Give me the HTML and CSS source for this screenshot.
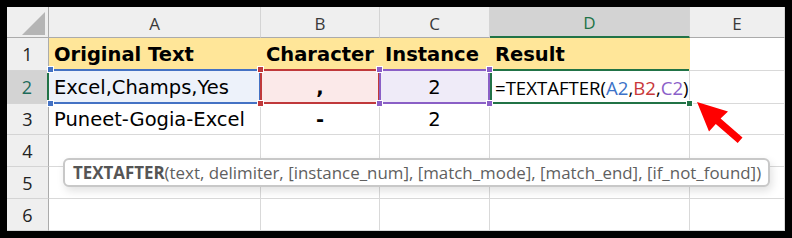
FILE: index.html
```html
<!DOCTYPE html>
<html>
  <head>
    <title>TEXTAFTER</title>
    <link rel="stylesheet" href="styles.css">
  </head>
  <body>
    <div class="sheet">
      <div class="grid">
        <div class="hd corner">
          <svg width="42" height="31"><polygon points="38,5 38,28 15,28" fill="#b5b5b5" /></svg>
        </div>
        <div class="hd">A</div>
        <div class="hd">B</div>
        <div class="hd">C</div>
        <div class="hd sel">D</div>
        <div class="hd">E</div>

        <div class="rh">1</div>
        <div class="c head">Original Text</div>
        <div class="c head">Character</div>
        <div class="c head">Instance</div>
        <div class="c head">Result</div>
        <div class="c"></div>

        <div class="rh sel">2</div>
        <div class="c rng blue">
          Excel,Champs,Yes
          <span class="hdl tl"></span><span class="hdl bl"></span>
        </div>
        <div class="c rng red mid bold">
          ,
          <span class="hdl tl"></span><span class="hdl bl"></span>
        </div>
        <div class="c rng purple mid">
          2
          <span class="hdl tl"></span><span class="hdl bl"></span>
          <span class="hdl tr"></span><span class="hdl br"></span>
        </div>
        <div class="c active">
          <span class="formula">=TEXTAFTER(<span class="f-blue">A2</span>,<span class="f-red">B2</span>,<span class="f-purple">C2</span>)</span>
          <span class="fill"></span>
        </div>
        <div class="c"></div>

        <div class="rh">3</div>
        <div class="c">Puneet-Gogia-Excel</div>
        <div class="c mid bold">-</div>
        <div class="c mid">2</div>
        <div class="c"></div>
        <div class="c"></div>

        <div class="rh">4</div>
        <div class="c"></div><div class="c"></div><div class="c"></div><div class="c"></div><div class="c"></div>
        <div class="rh">5</div>
        <div class="c"></div><div class="c"></div><div class="c"></div><div class="c"></div><div class="c"></div>
        <div class="rh">6</div>
        <div class="c"></div><div class="c"></div><div class="c"></div><div class="c"></div><div class="c"></div>
      </div>

      <div class="tooltip"><b>TEXTAFTER</b>(text, delimiter, [instance_num], [match_mode], [match_end], [if_not_found])</div>

      <svg class="arrow" width="778" height="224">
        <polygon points="690,95 721,104.5 713.6,111.6 735.5,130.6 730.7,135.9 708.8,116.9 702,124.5" fill="#ff0000" />
      </svg>
    </div>
  </body>
</html>
```

FILE: styles.css
```css
body {
  margin: 0;
  padding: 7px;
  background-color: #000;
}

.sheet {
  position: relative;
  width: 778px;
  height: 224px;
  overflow: hidden;
  background-color: #fff;
}

.grid {
  display: grid;
  grid-template-columns: 42px 212px 119px 110px 200px 95px;
  grid-template-rows: 31px 33px 33px 31px 32px 32px 32px;
}

.hd {
  display: flex;
  align-items: center;
  justify-content: center;
  padding-top: 2px;
  box-sizing: border-box;
  border-right: 1px solid #d4d4d4;
  border-bottom: 1px solid #ababab;
  background-color: #efefef;
  font-family: "Open Sans", sans-serif;
  font-size: 17px;
  color: #3a3a3a;
}

.hd.corner {
  padding: 0;
  border-right-color: #ababab;
}

.hd.sel {
  border-bottom: 2px solid #217346;
  background-color: #d3d3d3;
  color: #217346;
}

.rh {
  display: flex;
  align-items: center;
  justify-content: center;
  box-sizing: border-box;
  border-right: 1px solid #ababab;
  border-bottom: 1px solid #d4d4d4;
  background-color: #efefef;
  font-family: "Open Sans", sans-serif;
  font-size: 18px;
  color: #222;
}

.rh.sel {
  border-right: 2px solid #217346;
  background-color: #d3d3d3;
  color: #1d6b5a;
}

.c {
  position: relative;
  display: flex;
  align-items: center;
  padding-left: 5px;
  box-sizing: border-box;
  border-right: 1px solid #d9d9d9;
  border-bottom: 1px solid #d9d9d9;
  font-family: "DejaVu Sans", sans-serif;
  font-size: 19.5px;
  color: #000;
  white-space: nowrap;
}

.c.head {
  border-right-color: #ffe699;
  background-color: #ffe699;
  font-weight: bold;
}

.c.mid {
  justify-content: center;
  padding-left: 0;
}

.c.bold {
  font-weight: bold;
}

/* coloured reference ranges */
.rng::before {
  content: "";
  position: absolute;
  top: -2px;
  left: -1px;
  right: -1px;
  bottom: -1px;
  border: 2px solid;
  border-color: inherit;
  z-index: 1;
}

.rng.blue { background-color: #edf2fa; border-color: #4472c4; }
.rng.red { background-color: #fbe9e9; border-color: #c0393b; }
.rng.purple { background-color: #efebf8; border-color: #8a5fc6; }
.rng.blue::before { border-left: none; }

.hdl {
  position: absolute;
  width: 5px;
  height: 5px;
  border: 1px solid #fff;
  z-index: 2;
}

.blue .hdl { background-color: #4472c4; }
.red .hdl { background-color: #c0393b; }
.purple .hdl { background-color: #8a5fc6; }

.hdl.tl { left: -4px; top: -5px; }
.hdl.bl { left: -4px; bottom: -4px; }
.hdl.tr { right: -4px; top: -5px; }
.hdl.br { right: -4px; bottom: -4px; }

.blue .hdl.tl, .blue .hdl.bl { left: -2px; }

.active {
  overflow: visible;
}

.active::before {
  content: "";
  position: absolute;
  top: -2px;
  left: 0;
  right: 0;
  bottom: -1px;
  border: 2px solid #217346;
  border-right: none;
  z-index: 1;
}

.formula {
  font-family: "Open Sans", sans-serif;
  font-size: 18.6px;
  color: #000;
}

.f-blue { color: #3c72c8; }
.f-red { color: #c8373a; }
.f-purple { color: #8b5fc9; }

.fill {
  position: absolute;
  right: -4px;
  bottom: -4px;
  width: 5px;
  height: 5px;
  border: 1px solid #fff;
  background-color: #217346;
  z-index: 2;
}

.tooltip {
  position: absolute;
  left: 56px;
  top: 151px;
  width: 707px;
  height: 29px;
  box-sizing: border-box;
  padding-left: 8px;
  border: 2px solid #c8c8c8;
  border-radius: 6px;
  background-color: #fff;
  box-shadow: 2px 4px 8px rgba(0, 0, 0, 0.12);
  font-family: "Open Sans", sans-serif;
  font-size: 16.9px;
  line-height: 25px;
  color: #5f5f5f;
  white-space: nowrap;
  z-index: 3;
}

.tooltip b {
  color: #555;
}

.arrow {
  position: absolute;
  left: 0;
  top: 0;
  z-index: 4;
}
```
